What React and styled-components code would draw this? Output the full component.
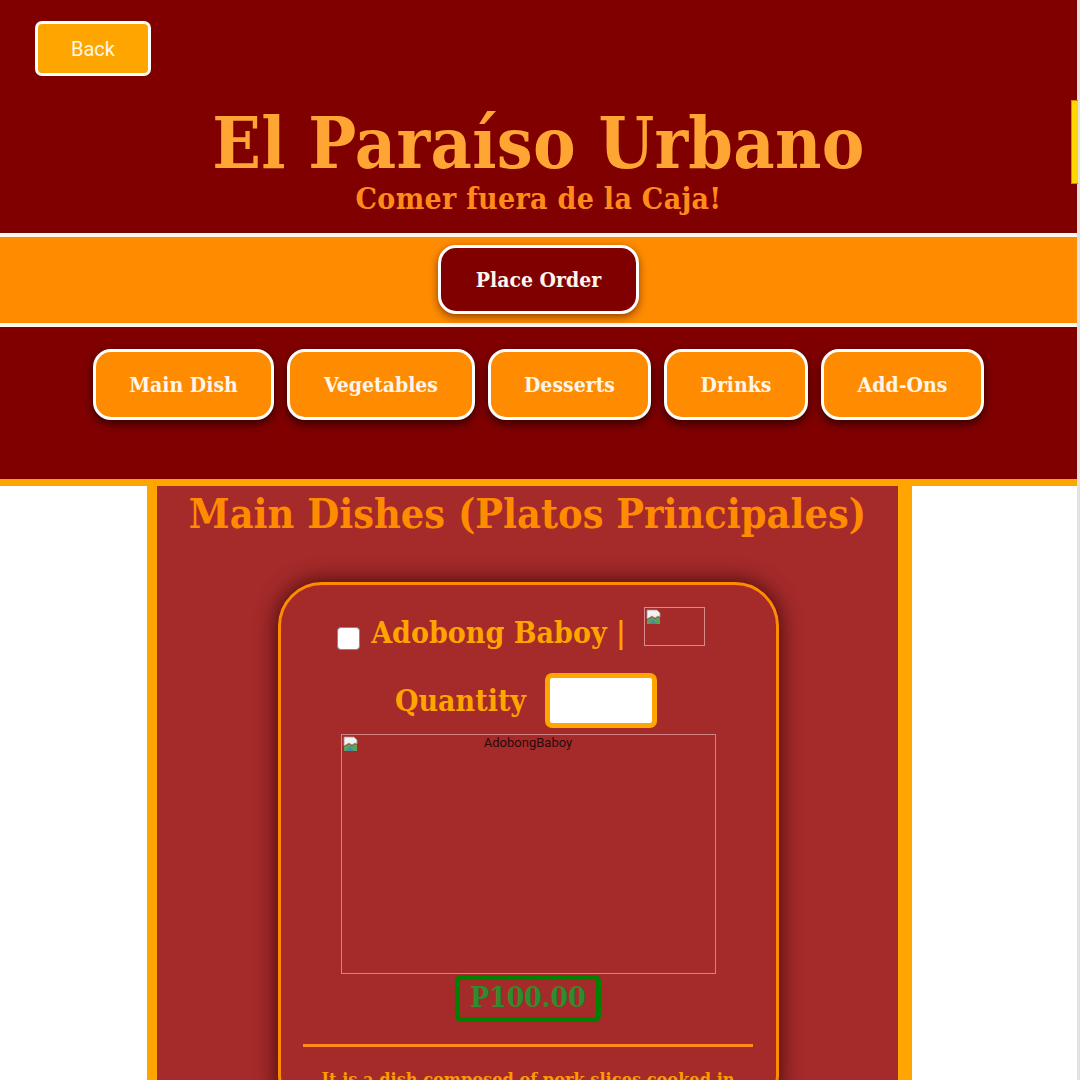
import React from "react";
import styled, { createGlobalStyle } from "styled-components";

const serif = `"DejaVu Serif Condensed", "DejaVu Serif", serif`;

const GlobalStyle = createGlobalStyle`
  html, body { margin: 0; padding: 0; background: #ffffff; overflow: hidden; }
  body { font-family: ${serif}; }
  * { box-sizing: border-box; }
`;

const Page = styled.div`
  width: 1080px;
  min-height: 1080px;
  background: #ffffff;
  border-right: 3px solid #e2e2e2;
`;

const Header = styled.header`
  background: #800000;
  padding: 21px 35px 0;
  height: 233px;
  display: flex;
  flex-direction: column;
`;

const BackButton = styled.button`
  width: 116px;
  height: 55px;
  background: #ffa500;
  border: 3px solid #ffffff;
  border-radius: 7px;
  color: #fff8e6;
  font-family: Roboto, "Liberation Sans", sans-serif;
  font-size: 20px;
  padding: 0;
`;

const TitleBlock = styled.div`
  display: flex;
  flex-direction: column;
  align-items: center;
  margin-top: 29px;
`;

const Title = styled.h1`
  margin: 0;
  font-family: ${serif};
  font-weight: bold;
  font-size: 71px;
  line-height: 76px;
  color: #ffa533;
  letter-spacing: 0.3px;
`;

const Subtitle = styled.h2`
  margin: 0;
  font-family: ${serif};
  font-weight: bold;
  font-size: 30px;
  line-height: 36px;
  color: #ff8c1a;
  letter-spacing: 0.3px;
`;

const OrderBar = styled.div`
  background: #ff8c00;
  border-top: 4px solid #fff6f0;
  border-bottom: 4px solid #fff6f0;
  height: 94px;
  display: flex;
  justify-content: center;
  align-items: center;
`;

const PlaceOrder = styled.button`
  width: 201px;
  height: 69px;
  margin-top: -2px;
  background: #800000;
  color: #fff5ea;
  border: 3px solid #ffffff;
  border-radius: 18px;
  font-family: ${serif};
  font-weight: bold;
  font-size: 21px;
  box-shadow: 0 3px 9px rgba(60, 0, 0, 0.55);
`;

const NavBar = styled.nav`
  background: #800000;
  height: 159px;
  border-bottom: 7px solid #ffa500;
  display: flex;
  justify-content: center;
  align-items: flex-start;
  gap: 13px;
  padding-top: 22px;
`;

const NavButton = styled.button`
  width: ${(p) => p.$w}px;
  height: 71px;
  background: #ff8c00;
  color: #fff5ea;
  border: 3px solid #ffffff;
  border-radius: 18px;
  font-family: ${serif};
  font-weight: bold;
  font-size: 21px;
  box-shadow: 0 4px 10px rgba(30, 0, 0, 0.75);
  padding: 0;
`;

const Main = styled.main`
  width: 765px;
  margin-left: 147px;
  background: #a52a2a;
  border-left: 10px solid #ffa500;
  border-right: 14px solid #ffa500;
  display: flex;
  flex-direction: column;
  align-items: center;
  padding-bottom: 40px;
`;

const SectionTitle = styled.h2`
  margin: 2px 0 0;
  font-family: ${serif};
  font-weight: bold;
  font-size: 41px;
  line-height: 52px;
  color: #ff8c00;
`;

const Card = styled.section`
  width: 501px;
  margin-top: 42px;
  margin-left: 1px;
  border: 3px solid #ff8c00;
  border-radius: 44px;
  background: #a52a2a;
  box-shadow: 0 0 22px rgba(40, 0, 0, 0.85);
  display: flex;
  flex-direction: column;
  align-items: center;
  padding: 22px 22px 0;
`;

const NameRow = styled.div`
  display: flex;
  align-items: flex-start;
  margin-left: -18px;
`;

const Check = styled.span`
  width: 23px;
  height: 23px;
  background: #ffffff;
  border: 1.5px solid #8a8a8a;
  border-radius: 4px;
  margin-top: 20px;
  margin-right: 11px;
  margin-left: 4px;
`;

const ItemName = styled.span`
  font-family: ${serif};
  font-weight: bold;
  font-size: 30px;
  line-height: 40px;
  color: #ffa500;
  margin-top: 6px;
`;

const Thumb = styled.div`
  position: relative;
  width: 61px;
  height: 39px;
  border: 1px solid rgba(255, 220, 220, 0.55);
  margin-left: 18px;
`;

const BrokenIcon = styled.svg`
  position: absolute;
  left: 1px;
  top: 1px;
`;

const QtyRow = styled.div`
  display: flex;
  align-items: center;
  gap: 19px;
  margin-top: 20px;
  margin-left: -4px;
`;

const QtyLabel = styled.span`
  font-family: ${serif};
  font-weight: bold;
  font-size: 30px;
  color: #ffa500;
`;

const QtyInput = styled.input`
  width: 112px;
  height: 55px;
  border: 5px solid #ffa500;
  border-radius: 7px;
  background: #ffffff;
  outline: none;
`;

const Picture = styled.div`
  position: relative;
  width: 375px;
  height: 240px;
  border: 1px solid rgba(255, 220, 220, 0.5);
  margin-top: 6px;
  text-align: center;
  font-family: Roboto, "Liberation Sans", sans-serif;
  font-size: 13px;
  line-height: 16px;
  color: #2a0a0a;
`;

const Price = styled.div`
  margin-top: 1px;
  border: 5px solid #008000;
  border-radius: 6px;
  padding: 0 10px;
  height: 47px;
  line-height: 36px;
  font-family: ${serif};
  font-weight: bold;
  font-size: 28px;
  color: #2e8b2e;
`;

const Rule = styled.hr`
  width: 450px;
  border: 0;
  border-top: 3px solid #ff8c1a;
  margin: 22px 0 0;
`;

const Description = styled.p`
  margin: 20px 0 0;
  width: 430px;
  text-align: center;
  font-family: ${serif};
  font-weight: bold;
  font-size: 18px;
  line-height: 25px;
  color: #ff9a00;
`;

const ScrollThumb = styled.div`
  position: fixed;
  right: 2px;
  top: 100px;
  width: 7px;
  height: 84px;
  background: #ffd700;
  border: 1px solid #d88a00;
  border-right: 0;
`;

const Broken = () => (
  <BrokenIcon width="16" height="16" viewBox="0 0 16 16">
    <path d="M1 1h10l3 3v4l-2 -1l-3 2l-3 -2l-5 3z" fill="#f2f2f2" stroke="#9a9a9a" strokeWidth="0.8" />
    <path d="M1 11l5 -3l3 2l3 -2l2 1v6h-13z" fill="#5aa35a" />
    <path d="M3 15l4 -4l4 4z" fill="#3a7fd0" opacity="0.7" />
  </BrokenIcon>
);

const navItems = [
  ["Main Dish", 181],
  ["Vegetables", 188],
  ["Desserts", 163],
  ["Drinks", 144],
  ["Add-Ons", 163],
];

export default function App() {
  return (
    <>
      <GlobalStyle />
      <Page>
        <Header>
          <BackButton>Back</BackButton>
          <TitleBlock>
            <Title>El Paraíso Urbano</Title>
            <Subtitle>Comer fuera de la Caja!</Subtitle>
          </TitleBlock>
        </Header>
        <OrderBar>
          <PlaceOrder>Place Order</PlaceOrder>
        </OrderBar>
        <NavBar>
          {navItems.map(([label, w]) => (
            <NavButton key={label} $w={w}>
              {label}
            </NavButton>
          ))}
        </NavBar>
        <Main>
          <SectionTitle>Main Dishes (Platos Principales)</SectionTitle>
          <Card>
            <NameRow>
              <Check />
              <ItemName>Adobong Baboy |</ItemName>
              <Thumb>
                <Broken />
              </Thumb>
            </NameRow>
            <QtyRow>
              <QtyLabel>Quantity</QtyLabel>
              <QtyInput type="text" />
            </QtyRow>
            <Picture>
              <Broken />
              AdobongBaboy
            </Picture>
            <Price>P100.00</Price>
            <Rule />
            <Description>It is a dish composed of pork slices cooked in soy sauce, vinegar and garlic.</Description>
          </Card>
        </Main>
      </Page>
      <ScrollThumb />
    </>
  );
}
